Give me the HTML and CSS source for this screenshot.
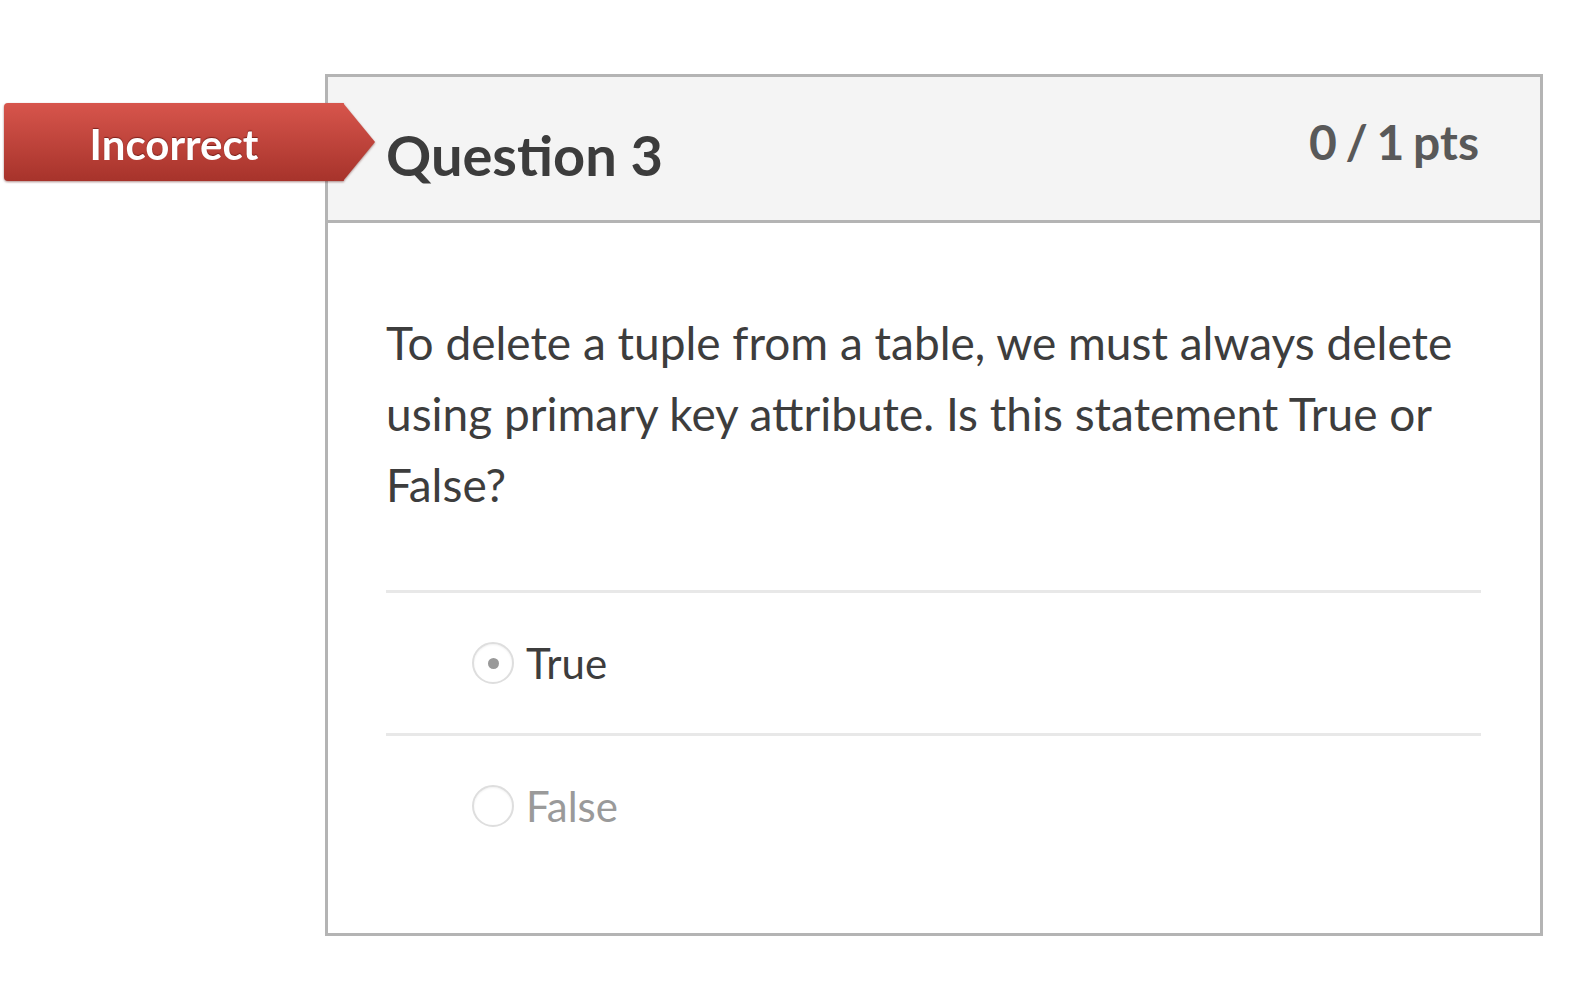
FILE: index.html
```html
<!DOCTYPE html>
<html lang="en">
<head>
<meta charset="utf-8">
<title>Question 3</title>
<link rel="stylesheet" href="styles.css">
</head>
<body>
<div class="question">
  <div class="badge"><span class="badge-text">Incorrect</span></div>
  <div class="card">
    <div class="header">
      <h2 class="title">Question 3</h2>
      <span class="pts">0 / 1 pts</span>
    </div>
    <div class="content">
      <p class="text">To delete a tuple from a table, we must always delete using primary key attribute. Is this statement True or False?</p>
      <div class="answers">
        <div class="answer selected">
          <span class="radio"><span class="dot"></span></span>
          <span class="label">True</span>
        </div>
        <div class="answer">
          <span class="radio"></span>
          <span class="label">False</span>
        </div>
      </div>
    </div>
  </div>
</div>
</body>
</html>
```

FILE: styles.css
```css
html, body {
  margin: 0;
  padding: 0;
  background: #ffffff;
}
body {
  font-family: Lato, "Open Sans", sans-serif;
  color: #3d3d3d;
}
.question {
  position: relative;
  padding-top: 74px;
  padding-left: 325px;
}
.card {
  width: 1212px;
  border: 3px solid #b4b4b4;
  background: #fff;
}
.header {
  background: #f4f4f4;
  border-bottom: 3px solid #b4b4b4;
  height: 143px;
  display: flex;
  justify-content: space-between;
  align-items: flex-start;
  padding: 0 61px 0 58px;
}
.title {
  margin: 0;
  font-size: 56px;
  font-weight: 700;
  color: #3c3c3c;
  line-height: 1;
  padding-top: 50px;
}
.pts {
  font-size: 48px;
  font-weight: 700;
  color: #595959;
  line-height: 1;
  padding-top: 41px;
  word-spacing: -3px;
}
.content {
  padding: 84px 59px 57px 58px;
}
.text {
  margin: 0 0 70px;
  font-size: 46px;
  line-height: 71px;
  color: #3d3d3d;
}
.answer {
  border-top: 3px solid #e8e8e8;
  height: 140px;
  display: flex;
  align-items: center;
  padding-left: 86px;
  gap: 12px;
}
.radio {
  width: 38px;
  height: 38px;
  border: 2px solid #dedede;
  border-radius: 50%;
  display: flex;
  align-items: center;
  justify-content: center;
  box-shadow: inset 0 1px 2px rgba(0,0,0,0.06);
}
.dot {
  width: 11px;
  height: 11px;
  border-radius: 50%;
  background: #999;
}
.label {
  font-size: 42px;
  color: #9a9a9a;
}
.selected .label {
  color: #3d3d3d;
}
.badge {
  position: absolute;
  left: 4px;
  top: 103px;
  width: 368px;
  height: 78px;
  display: flex;
  filter: drop-shadow(0 1px 1px rgba(90,20,15,0.5));
}
.badge::before {
  content: "";
  width: 340px;
  height: 78px;
  border-radius: 4px 0 0 4px;
  background: linear-gradient(#d7554c, #a7332b);
  box-shadow: inset -1px 0 0 rgba(255,255,255,0.15);
  position: absolute;
  left: 0;
  top: 0;
}
.badge::after {
  content: "";
  position: absolute;
  left: 339px;
  top: 0;
  width: 32px;
  height: 78px;
  background: linear-gradient(#d7554c, #a7332b);
  clip-path: polygon(0 0, 0 100%, 100% 50%);
}
.badge-text {
  position: relative;
  z-index: 1;
  width: 340px;
  text-align: center;
  font-size: 42px;
  font-weight: 700;
  color: #fff;
  line-height: 78px;
  margin-top: 2px;
  text-shadow: 0 -1px 1px rgba(80,10,5,0.6);
}
```
